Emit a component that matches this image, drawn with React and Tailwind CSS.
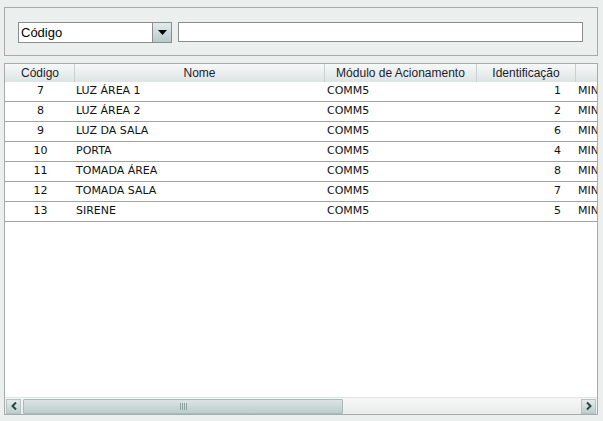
import React from 'react';

const rows = [
  { codigo: '7', nome: 'LUZ ÁREA 1', modulo: 'COMM5', ident: '1' },
  { codigo: '8', nome: 'LUZ ÁREA 2', modulo: 'COMM5', ident: '2' },
  { codigo: '9', nome: 'LUZ DA SALA', modulo: 'COMM5', ident: '6' },
  { codigo: '10', nome: 'PORTA', modulo: 'COMM5', ident: '4' },
  { codigo: '11', nome: 'TOMADA ÁREA', modulo: 'COMM5', ident: '8' },
  { codigo: '12', nome: 'TOMADA SALA', modulo: 'COMM5', ident: '7' },
  { codigo: '13', nome: 'SIRENE', modulo: 'COMM5', ident: '5' },
];

const headCell = "h-full flex items-center justify-center shrink-0 border-r border-[#c9d0cf] text-[12px] text-[#1c1c2c]";

const App = () => {
  return (
    <div className="w-[603px] h-[421px] bg-[#ebefee] overflow-hidden pt-[7px] px-[4px]" style={{ fontFamily: '"Liberation Sans", Arial, sans-serif' }}>
      {/* filtro */}
      <div className="w-[594px] h-[49px] border border-[#a8abaa] flex items-start pt-[14px] pl-[13px]">
        <div className="w-[154px] h-[21px] border border-[#8a8d8c] bg-white flex">
          <div className="flex-1 flex items-center pl-[2px] text-[13px] text-black">Código</div>
          <div className="w-[19px] h-full border-l border-[#8a8d8c] bg-gradient-to-b from-[#e3ebea] to-[#b8cbc9] flex items-center justify-center">
            <svg width="9" height="5" viewBox="0 0 9 5"><path d="M0 0h9L4.5 5z" fill="#000" /></svg>
          </div>
        </div>
        <div className="ml-[6px] w-[405px] h-[20px] border border-[#8a8d8c] bg-white" />
      </div>

      {/* tabela */}
      <div className="mt-[7px] w-[594px] h-[352px] border border-[#a8abaa] bg-white flex flex-col overflow-hidden">
        <div className="h-[18px] flex shrink-0 bg-gradient-to-b from-[#f7f9f9] to-[#dde4e3] pl-[1px]">
          <div className={`${headCell} w-[69px]`}>Código</div>
          <div className={`${headCell} w-[250px]`}>Nome</div>
          <div className={`${headCell} w-[152px]`}>Módulo de Acionamento</div>
          <div className={`${headCell} w-[99px]`}>Identificação</div>
          <div className={`${headCell} w-[80px]`}></div>
        </div>
        <div className="flex-1 overflow-hidden" style={{ fontFamily: '"DejaVu Sans", Verdana, sans-serif' }}>
          {rows.map((r) => (
            <div key={r.codigo} className="h-[20px] flex items-center border-b border-[#a3a3a3] text-[11px] text-[#111] pl-[1px] whitespace-nowrap">
              <div className="w-[69px] shrink-0 text-center">{r.codigo}</div>
              <div className="w-[250px] shrink-0 pl-[1px]">{r.nome}</div>
              <div className="w-[152px] shrink-0 pl-[2px]">{r.modulo}</div>
              <div className="w-[99px] shrink-0 text-right pr-[15px]">{r.ident}</div>
              <div className="w-[80px] shrink-0 pl-[2px]">MINUTOS</div>
            </div>
          ))}
        </div>
        {/* barra de rolagem */}
        <div className="h-[17px] shrink-0 flex items-center px-[1px] bg-gradient-to-b from-[#f7f7f7] to-[#e9eceb] border-t border-[#dfe3e2]">
          <div className="w-[15px] h-[15px] border border-[#b5c4c2] bg-gradient-to-b from-[#e3ebea] to-[#bccecc] flex items-center justify-center">
            <svg width="6" height="8" viewBox="0 0 6 8"><path d="M5 0.5L1.5 4L5 7.5" stroke="#2f4442" strokeWidth="2" fill="none" /></svg>
          </div>
          <div className="ml-[2px] w-[320px] h-[15px] border border-[#a9bcba] rounded-[1px] bg-gradient-to-b from-[#dae4e3] to-[#bccecc] flex items-center justify-center gap-[1px]">
            <span className="w-[1px] h-[7px] bg-[#8fa3a1]" />
            <span className="w-[1px] h-[7px] bg-[#8fa3a1]" />
            <span className="w-[1px] h-[7px] bg-[#8fa3a1]" />
            <span className="w-[1px] h-[7px] bg-[#8fa3a1]" />
          </div>
          <div className="flex-1" />
          <div className="w-[15px] h-[15px] border border-[#b5c4c2] bg-gradient-to-b from-[#e3ebea] to-[#bccecc] flex items-center justify-center">
            <svg width="6" height="8" viewBox="0 0 6 8"><path d="M1 0.5L4.5 4L1 7.5" stroke="#2f4442" strokeWidth="2" fill="none" /></svg>
          </div>
        </div>
      </div>
    </div>
  );
};

export default App;
